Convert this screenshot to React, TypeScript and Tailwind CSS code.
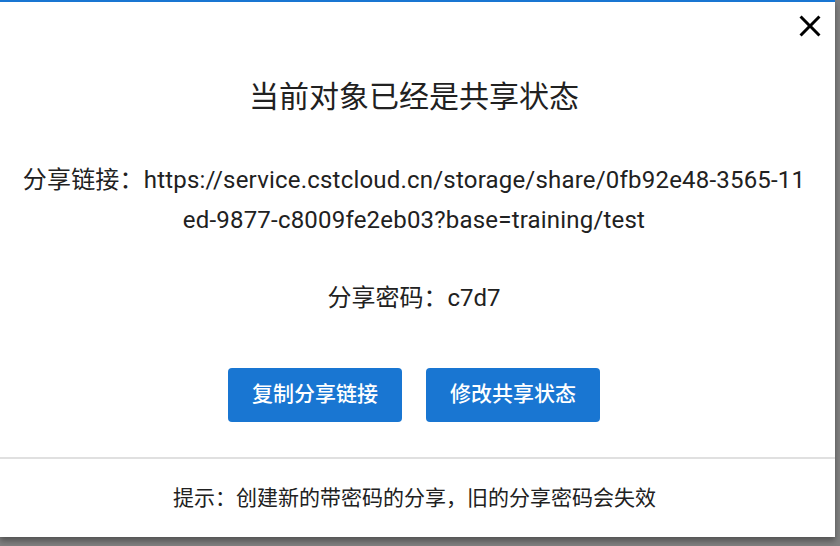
const font = "font-['Roboto','Noto_Sans_CJK_SC',sans-serif]"

function CloseIcon() {
  return (
    <svg width="36" height="36" viewBox="0 0 24 24" fill="#000">
      <path d="M19 6.41 17.59 5 12 10.59 6.41 5 5 6.41 10.59 12 5 17.59 6.41 19 12 13.41 17.59 19 19 17.59 13.41 12z" />
    </svg>
  )
}

export default function App() {
  return (
    <div className={`w-[840px] h-[546px] bg-[#808080] overflow-hidden ${font}`}>
      <div className="relative w-[835px] h-[537px] bg-white border-t-2 border-[#1976d2] shadow-[0_4px_6px_rgba(0,0,0,0.35)] flex flex-col text-[#212121]">
        {/* Close */}
        <button className="absolute top-[6px] right-[7px] p-0">
          <CloseIcon />
        </button>

        {/* Body */}
        <div className="flex flex-col items-center pl-[20px] pr-[27px] pt-[72px]">
          <h2 className="text-[30px] leading-[45px] font-normal">当前对象已经是共享状态</h2>
          <p className="mt-[41px] text-[24px] leading-[40px] tracking-[0.2px] text-center break-all">
            分享链接：https://service.cstcloud.cn/storage/share/0fb92e48-3565-11ed-9877-c8009fe2eb03?base=training/test
          </p>
          <p className="mt-[38px] text-[24px] leading-[40px]">分享密码：c7d7</p>
          <div className="mt-[50px] flex gap-[24px]">
            <button className="w-[174px] h-[54px] rounded bg-[#1976d2] text-white text-[21px] font-medium">
              复制分享链接
            </button>
            <button className="w-[174px] h-[54px] rounded bg-[#1976d2] text-white text-[21px] font-medium">
              修改共享状态
            </button>
          </div>
        </div>

        {/* Divider */}
        <div className="mt-[35px] h-[2px] bg-[#e0e0e0]" />

        {/* Footer */}
        <div className="pt-[24px] flex justify-center pl-[4px] pr-[10px]">
          <p className="text-[21px] leading-[30px] text-[#212121]">
            提示：创建新的带密码的分享，旧的分享密码会失效
          </p>
        </div>
      </div>
    </div>
  )
}
